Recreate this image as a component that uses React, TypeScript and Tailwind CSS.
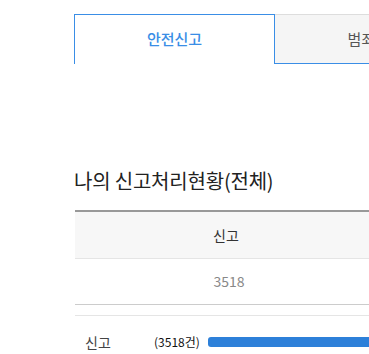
import React from 'react';

const font = { fontFamily: '"Noto Sans CJK KR", "Noto Sans", sans-serif' };

const stats = [
  { label: '신고', value: 3518 },
  { label: '처리중', value: 0 },
];

export default function App() {
  return (
    <div className="h-[354px] w-[369px] overflow-hidden bg-white" style={font}>
      <div className="w-[700px] pl-[74px] pt-[14px]">
        <div className="flex">
          <div className="flex h-[50px] w-[201px] items-center justify-center border border-b-0 border-[#3a8ee6] text-[15px] font-medium text-[#3a8ee6]">
            안전신고
          </div>
          <div className="flex h-[50px] w-[200px] items-center justify-center border-t border-b border-t-[#dddddd] border-b-[#3a8ee6] bg-[#f5f5f5] text-[15px] text-[#555]">
            범죄신고
          </div>
        </div>

        <h2 className="mt-[103px] text-[20px] leading-[28px] tracking-[-0.2px] text-[#222]">
          나의 신고처리현황(전체)
        </h2>

        <div className="ml-px mt-[15px] w-[604px] border-t-2 border-[#999]">
          <div className="grid h-[47px] grid-cols-2 border-b border-[#e5e5e5] bg-[#f7f7f7]">
            {stats.map((s) => (
              <div key={s.label} className="flex items-center justify-center text-[14px] text-[#333]">
                {s.label}
              </div>
            ))}
          </div>
          <div className="grid h-[46px] grid-cols-2 border-b border-[#cccccc]">
            {stats.map((s) => (
              <div key={s.label} className="flex items-center justify-center pl-[6px] text-[14px] text-[#888]">
                {s.value}
              </div>
            ))}
          </div>
          <div className="mt-[10px] border-t border-[#e5e5e5]" />
          <div className="flex h-[50px] items-center pt-[2px]">
            <span className="w-[79px] pl-[10px] text-[14px] text-[#444]">신고</span>
            <span className="w-[54px] text-[12px] text-[#111]">(3518건)</span>
            <div className="h-[10px] w-[300px] rounded-[3px] bg-[#2d80d9]" />
          </div>
        </div>
      </div>
    </div>
  );
}
